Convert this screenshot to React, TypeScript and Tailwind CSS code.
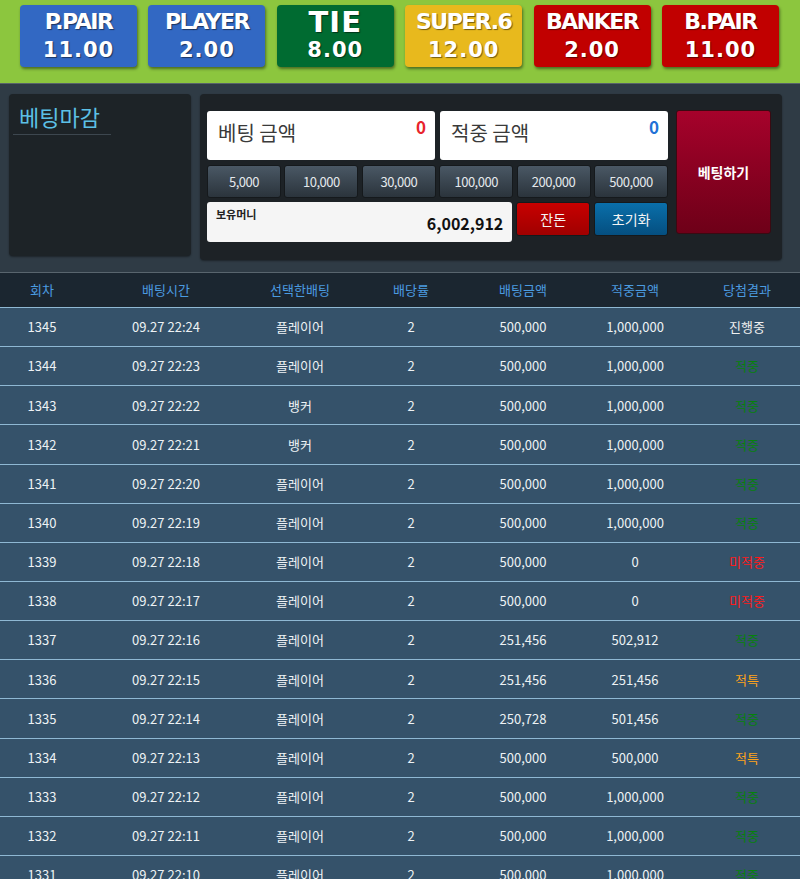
import React from "react";

const odds = [
  { label: "P.PAIR", value: "11.00", bg: "bg-[#3268c3]" },
  { label: "PLAYER", value: "2.00", bg: "bg-[#3268c3]" },
  { label: "TIE", value: "8.00", bg: "bg-[#006b31]", big: true },
  { label: "SUPER.6", value: "12.00", bg: "bg-[#e8b91d]" },
  { label: "BANKER", value: "2.00", bg: "bg-[#c10000]" },
  { label: "B.PAIR", value: "11.00", bg: "bg-[#c10000]" },
];

const chips = ["5,000", "10,000", "30,000", "100,000", "200,000", "500,000"];

type Row = [string, string, string, string, string, string];

const rows: Row[] = [
  ["1345", "22:24", "플레이어", "500,000", "1,000,000", "진행중"],
  ["1344", "22:23", "플레이어", "500,000", "1,000,000", "적중"],
  ["1343", "22:22", "뱅커", "500,000", "1,000,000", "적중"],
  ["1342", "22:21", "뱅커", "500,000", "1,000,000", "적중"],
  ["1341", "22:20", "플레이어", "500,000", "1,000,000", "적중"],
  ["1340", "22:19", "플레이어", "500,000", "1,000,000", "적중"],
  ["1339", "22:18", "플레이어", "500,000", "0", "미적중"],
  ["1338", "22:17", "플레이어", "500,000", "0", "미적중"],
  ["1337", "22:16", "플레이어", "251,456", "502,912", "적중"],
  ["1336", "22:15", "플레이어", "251,456", "251,456", "적특"],
  ["1335", "22:14", "플레이어", "250,728", "501,456", "적중"],
  ["1334", "22:13", "플레이어", "500,000", "500,000", "적특"],
  ["1333", "22:12", "플레이어", "500,000", "1,000,000", "적중"],
  ["1332", "22:11", "플레이어", "500,000", "1,000,000", "적중"],
  ["1331", "22:10", "플레이어", "500,000", "1,000,000", "적중"],
];

const resultColor: Record<string, string> = {
  진행중: "text-[#f0f0f0]",
  적중: "text-[#07800d]",
  미적중: "text-[#ff1a1a]",
  적특: "text-[#ffa31a]",
};

const cols = "grid grid-cols-[84px_164px_104px_118px_106px_118px_106px]";
const kr = "font-['Noto_Sans_CJK_KR','Noto_Sans',sans-serif]";

export default function App() {
  return (
    <div className={`w-[800px] h-[879px] overflow-hidden bg-[#2f3b45] ${kr}`}>
      {/* odds bar */}
      <div className="h-[83px] bg-[#8cc63e] flex gap-[11.4px] pl-[20px] pt-[5px]">
        {odds.map((o) => (
          <div
            key={o.label}
            className={`w-[117px] h-[62px] rounded-[4px] ${o.bg} shadow-[1px_2px_3px_rgba(0,0,0,0.45)] flex flex-col items-center text-white font-['DejaVu_Sans',sans-serif] font-bold [text-shadow:1px_1px_1px_rgba(0,0,0,0.5)]`}
          >
            {o.big ? (
              <span className="text-[29px] leading-[30px] mt-[2px] tracking-[1px]">{o.label}</span>
            ) : (
              <span className="text-[22px] leading-[26px] mt-[4px] tracking-[-1.5px]">{o.label}</span>
            )}
            <span className={`text-[21px] leading-[24px] tracking-[1px] ${o.big ? "mt-[1px]" : "mt-[3px]"}`}>
              {o.value}
            </span>
          </div>
        ))}
      </div>

      {/* betting area */}
      <div className="h-[189px] border-t border-[#58636b] bg-[#2f3b45] flex pt-[10px] pl-[9px] gap-[9px]">
        <div className="w-[182px] h-[162px] rounded-[4px] bg-[#1d2327] shadow-[0_1px_2px_rgba(0,0,0,0.4)] px-[4px] pt-[7px]">
          <div className="w-[98px] border-b border-[#3d474f] pl-[6px] pb-[3px] text-[22px] leading-[30px] text-[#5cc0e6]">
            베팅마감
          </div>
        </div>
        <div className="w-[582px] h-[166px] rounded-[4px] bg-[#1d2226] shadow-[0_1px_2px_rgba(0,0,0,0.4)] flex pl-[7px] pt-[16px] gap-[8px]">
          <div className="w-[461px] flex flex-col">
            <div className="flex gap-[5px] mt-[1px]">
              <div className="relative w-[228px] h-[49px] rounded-[3px] bg-white pl-[11px] pt-[7px] text-[20px] text-[#3a3a3a]">
                베팅 금액
                <span className="absolute right-[9px] top-[3px] text-[17px] font-bold text-[#e8242d]">0</span>
              </div>
              <div className="relative w-[228px] h-[49px] rounded-[3px] bg-white pl-[11px] pt-[7px] text-[20px] text-[#3a3a3a]">
                적중 금액
                <span className="absolute right-[9px] top-[3px] text-[17px] font-bold text-[#2271d6]">0</span>
              </div>
            </div>
            <div className="flex gap-[3.4px] mt-[5px]">
              {chips.map((c) => (
                <div
                  key={c}
                  className="w-[74px] h-[33px] rounded-[3px] border border-[#15191c] bg-gradient-to-b from-[#4a5865] to-[#2b343c] flex items-center justify-center text-[13px] text-[#e4e8ec] tracking-[-0.5px]"
                >
                  {c}
                </div>
              ))}
            </div>
            <div className="flex gap-[4px] mt-[4px]">
              <div className="relative w-[306px] h-[40px] rounded-[3px] bg-[#f5f5f5]">
                <span className="absolute left-[9px] top-[4px] text-[11px] font-bold text-[#222]">보유머니</span>
                <span className="absolute right-[9px] top-[9px] text-[16px] font-bold text-[#111]">6,002,912</span>
              </div>
              <div className="w-[74px] h-[34px] rounded-[3px] border border-[#15191c] bg-gradient-to-b from-[#c80000] to-[#a00000] flex items-center justify-center text-[14px] text-[#f4f4f4]">
                잔돈
              </div>
              <div className="w-[74px] h-[34px] rounded-[3px] border border-[#15191c] bg-gradient-to-b from-[#0a6faa] to-[#054f80] flex items-center justify-center text-[14px] text-[#f4f4f4]">
                초기화
              </div>
            </div>
          </div>
          <div className="w-[95px] h-[124px] rounded-[3px] border border-[#3a0a12] bg-gradient-to-b from-[#a6022b] to-[#6e0018] flex items-center justify-center text-[14px] font-bold text-white">
            베팅하기
          </div>
        </div>
      </div>

      {/* history table */}
      <div className="border-t border-[#59656e] bg-[#1b2630]">
        <div className={`${cols} h-[35px] items-center text-center text-[13px] text-[#4b9be0] border-b border-[#8fb8d3]`}>
          <span>회차</span>
          <span>배팅시간</span>
          <span>선택한배팅</span>
          <span>배당률</span>
          <span>배팅금액</span>
          <span>적중금액</span>
          <span>당첨결과</span>
        </div>
        {rows.map((r) => (
          <div
            key={r[0]}
            className={`${cols} h-[39.15px] items-center text-center text-[13px] text-[#eef2f5] bg-[#35526a] border-b border-[#8fb8d3]`}
          >
            <span>{r[0]}</span>
            <span>09.27 {r[1]}</span>
            <span>{r[2]}</span>
            <span>2</span>
            <span>{r[3]}</span>
            <span>{r[4]}</span>
            <span className={resultColor[r[5]]}>{r[5]}</span>
          </div>
        ))}
      </div>
    </div>
  );
}
